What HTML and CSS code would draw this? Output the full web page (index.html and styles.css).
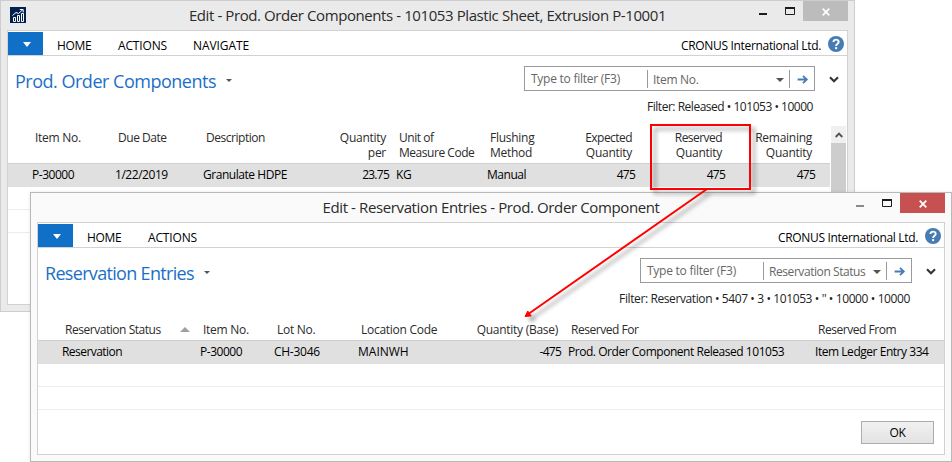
FILE: index.html
```
<!DOCTYPE html>
<html lang="en">
<head>
<meta charset="utf-8">
<title>Prod. Order Components</title>
<link rel="stylesheet" href="styles.css">
</head>
<body>
<main class="desktop">
  <section class="window window-back">
    <header class="titlebar">
      <svg class="logo" viewBox="0 0 16 16"><rect width="16" height="16" fill="#002050"/><path d="M3.5 14.5v-4h2v4zM7.5 14.5v-6h2v6zM11.5 14.5V6.5h2v8z" fill="none" stroke="#fff"/><path d="M2.5 8.5 6 5.5 8.5 6.5 13 2.5M9.8 2.5h3.4v3" fill="none" stroke="#fff"/></svg>
      <h1 class="caption">Edit - Prod. Order Components - 101053 Plastic Sheet, Extrusion P-10001</h1>
      <div class="controls">
        <svg class="sys" viewBox="0 0 44 20"><path d="M0 13h8" stroke="#1c1c1c" stroke-width="2"/><path d="M26.5 7v6.5h9V7" fill="none" stroke="#1c1c1c"/><path d="M26 7h10" stroke="#1c1c1c" stroke-width="2"/></svg>
        <button class="close"><svg viewBox="0 0 8 8"><path d="M.7.7l6.6 6.6M7.3.7.7 7.3" stroke="#fff" stroke-width="1.7"/></svg></button>
      </div>
    </header>
    <div class="frame">
      <nav class="menubar">
        <button class="app"><i class="tri-white"></i></button>
        <span class="menu-home">HOME</span><span class="menu-actions">ACTIONS</span><span class="menu-nav">NAVIGATE</span>
        <span class="company">CRONUS International Ltd.</span>
        <svg class="help" viewBox="0 0 16 16"><circle cx="8" cy="8" r="8" fill="#477bb3"/><path d="M5.4 6.1C5.4 2.8 10.7 2.9 10.7 6 10.7 7.9 8.1 7.8 8.1 10" fill="none" stroke="#fff" stroke-width="1.9"/><rect x="7.1" y="11.1" width="2" height="2" fill="#fff"/></svg>
      </nav>
      <div class="pagehead">
        <h2>Prod. Order Components</h2><i class="tri-small"></i>
        <div class="search">
          <span class="query">Type to filter (F3)</span>
          <span class="field">Item No.<i class="tri-drop"></i></span>
          <span class="go"><svg viewBox="0 0 12 10"><path d="M0 5h10M6 .9 10.2 5 6 9.1" fill="none" stroke="#477bb3" stroke-width="2"/></svg></span>
        </div>
        <svg class="chev" viewBox="0 0 10 7"><path d="M1 1.2l4 4 4-4" fill="none" stroke="#333" stroke-width="2.1"/></svg>
      </div>
      <p class="applied applied-short">Filter: Released • 101053 • 10000</p>
      <div class="gridwrap">
        <div class="grid">
          <div class="row head">
            <span class="snug">Item No.</span><span>Due Date</span><span>Description</span><span class="r snug"><b>Quantity</b><b>per</b></span><span><b>Unit of</b><b>Measure Code</b></span><span class="snug"><b>Flushing</b><b>Method</b></span><span class="r"><b class="tight">Expected</b><b class="snug">Quantity</b></span><span class="r"><b class="tight">Reserved</b><b class="snug">Quantity</b></span><span class="r snug"><b>Remaining</b><b>Quantity</b></span>
          </div>
          <div class="row selected">
            <span>P-30000</span><span>1/22/2019</span><span>Granulate HDPE</span><span class="r num">23.75</span><span>KG</span><span>Manual</span><span class="r num">475</span><span class="r num">475</span><span class="r num">475</span>
          </div>
          <div class="row empty"></div>
          <div class="row empty"></div>
        </div>
        <div class="scroll"><div class="scroll-up"><svg viewBox="0 0 8 6"><path d="M.7 5 4 1.6 7.3 5" fill="none" stroke="#505050" stroke-width="1.8"/></svg></div></div>
      </div>
    </div>
  </section>

  <section class="window window-front">
    <header class="titlebar">
      <h1 class="caption">Edit - Reservation Entries - Prod. Order Component</h1>
      <div class="controls">
        <svg class="sys" viewBox="0 0 44 20"><path d="M0 13h8" stroke="#8a8a8a" stroke-width="2"/><path d="M26.5 7v6.5h9V7" fill="none" stroke="#1c1c1c"/><path d="M26 7h10" stroke="#1c1c1c" stroke-width="2"/></svg>
        <button class="close"><svg viewBox="0 0 8 8"><path d="M.7.7l6.6 6.6M7.3.7.7 7.3" stroke="#fff" stroke-width="1.7"/></svg></button>
      </div>
    </header>
    <div class="frame">
      <nav class="menubar">
        <button class="app"><i class="tri-white"></i></button>
        <span class="menu-home">HOME</span><span class="menu-actions">ACTIONS</span>
        <span class="company">CRONUS International Ltd.</span>
        <svg class="help" viewBox="0 0 16 16"><circle cx="8" cy="8" r="8" fill="#477bb3"/><path d="M5.4 6.1C5.4 2.8 10.7 2.9 10.7 6 10.7 7.9 8.1 7.8 8.1 10" fill="none" stroke="#fff" stroke-width="1.9"/><rect x="7.1" y="11.1" width="2" height="2" fill="#fff"/></svg>
      </nav>
      <div class="pagehead">
        <h2>Reservation Entries</h2><i class="tri-small"></i>
        <div class="search">
          <span class="query">Type to filter (F3)</span>
          <span class="field">Reservation Status<i class="tri-drop"></i></span>
          <span class="go"><svg viewBox="0 0 12 10"><path d="M0 5h10M6 .9 10.2 5 6 9.1" fill="none" stroke="#477bb3" stroke-width="2"/></svg></span>
        </div>
        <svg class="chev" viewBox="0 0 10 7"><path d="M1 1.2l4 4 4-4" fill="none" stroke="#333" stroke-width="2.1"/></svg>
      </div>
      <p class="applied">Filter: Reservation • 5407 • 3 • 101053 • '' • 10000 • 10000</p>
      <div class="grid">
        <div class="row head">
          <span class="sorted">Reservation Status<i class="tri-sort"></i></span><span class="snug">Item No.</span><span class="snug">Lot No.</span><span class="snug">Location Code</span><span class="r snug">Quantity (Base)</span><span>Reserved For</span><span>Reserved From</span>
        </div>
        <div class="row selected">
          <span class="tight">Reservation</span><span>P-30000</span><span class="snug">CH-3046</span><span class="wide">MAINWH</span><span class="r num">-475</span><span>Prod. Order Component Released 101053</span><span>Item Ledger Entry 334</span>
        </div>
        <div class="row empty"></div>
        <div class="row empty"></div>
      </div>
      <footer class="actions"><button class="ok">OK</button></footer>
    </div>
  </section>

  <svg class="callout" viewBox="0 0 952 462">
    <g fill="none" stroke="#f00">
      <rect x="651" y="125" width="99" height="64" stroke-width="2"/>
      <path d="M707 189 529 313.5" stroke-width="2"/>
      <path d="M525 316.5l2.8-5.4 3.4 4.8z" fill="#f00"/>
    </g>
  </svg>
</main>
</body>
</html>
```
FILE: styles.css
```
* { box-sizing: border-box; }
body {
  margin: 0;
  background: #fff;
  color: #000;
  font: 12px/15px "Open Sans", "Noto Sans", sans-serif;
  letter-spacing: -0.46px;
  overflow: hidden;
}
h1, h2, p { margin: 0; font-weight: 400; }
b { display: block; font-weight: 400; }
button { padding: 0; border: 0; border-radius: 0; font: inherit; letter-spacing: inherit; }
svg { display: block; }
.desktop { position: relative; width: 952px; height: 462px; }

/* windows */
.window { position: absolute; display: flex; flex-direction: column; border: 1px solid #cdcdcd; padding: 0 6px 6px; }
.window-back { left: 0; top: 0; width: 855px; height: 312px; background: #eaeaea; }
.window-front { left: 30px; top: 192px; width: 922px; height: 270px; background: #fafafa; border-color: #b9b9b9; box-shadow: 0 0 3px rgba(0,0,0,.1); }
.titlebar { display: grid; grid-template-columns: 90px 1fr 90px; height: 29px; flex: none; }
.logo { grid-column: 1; width: 16px; height: 16px; margin: 6px 0 0 3px; }
.caption { grid-column: 2; justify-self: center; margin-top: 4px; font-size: 15px; line-height: 20px; letter-spacing: -0.41px; color: #2b2b2b; white-space: nowrap; }
.window-front .caption { letter-spacing: -0.38px; }
.controls { grid-column: 3; display: flex; justify-content: flex-end; }
.sys { width: 44px; height: 20px; flex: none; }
.close { display: grid; place-items: center; width: 45px; height: 20px; flex: none; background: #bcbcbc; }
.window-front .close { background: #c75050; }
.close svg { width: 8px; height: 8px; margin-top: 1px; }
.frame { flex: 1; min-height: 0; display: flex; flex-direction: column; border: 1px solid #d2d2d2; background: #fff; }

/* menu */
.menubar { display: flex; height: 25px; flex: none; padding-top: 1px; border-bottom: 1px solid #d2d2d2; line-height: 27px; }
.app { width: 35px; height: 23px; display: grid; place-items: center; background: #1070c8; }
.app i { margin: 2px 0 0 2px; }
.tri-white, .tri-small, .tri-drop, .tri-sort { display: block; width: 0; height: 0; border: solid transparent; }
.tri-white { border-width: 5px 4px 0; border-top-color: #fff; }
.tri-small { border-width: 3px 3px 0; border-top-color: #555; }
.tri-drop { border-width: 4px 4px 0; border-top-color: #555; }
.tri-sort { border-width: 0 5px 5px; border-bottom-color: #a0a0a0; }
.menu-home { width: 61px; padding-left: 14px; letter-spacing: -0.35px; }
.menu-actions { width: 75px; padding-left: 14px; letter-spacing: -0.15px; }
.menu-nav { padding-left: 14px; letter-spacing: -0.09px; }
.company { margin-left: auto; letter-spacing: -0.33px; }
.help { width: 16px; height: 16px; margin: 4px 3px 0 7px; }

/* page heading and search */
.pagehead { display: flex; align-items: flex-start; height: 36px; flex: none; padding: 10px 8px 0 7px; }
h2 { margin-top: 3px; font-size: 18px; line-height: 24px; letter-spacing: -0.49px; color: #1b70c6; white-space: nowrap; }
.window-front h2 { letter-spacing: -0.68px; }
.pagehead .tri-small { margin: 13px 0 0 10px; }
.search { display: flex; margin-left: auto; width: 291px; height: 25px; border: 1px solid #9b9b9b; color: #666; line-height: 23px; }
.query { flex: 1; padding-left: 6px; letter-spacing: -0.25px; }
.field { display: flex; justify-content: space-between; align-items: center; height: 18px; margin-top: 3px; width: 142px; padding: 1px 5px 0 5px; border-left: 1px solid #9b9b9b; letter-spacing: -0.3px; }
.go { height: 18px; margin-top: 3px; width: 25px; padding: 5px 0 0 7px; border-left: 1px solid #9b9b9b; }
.go svg { width: 12px; height: 9px; }
.window-front .search { width: 272px; }
.window-front .field { width: 123px; letter-spacing: -0.43px; }
.chev { width: 10px; height: 7px; margin: 10px 0 0 14px; }
.applied { height: 34px; flex: none; padding: 7px 34px 0 0; text-align: right; letter-spacing: -0.39px; color: #222; }
.applied-short { letter-spacing: -0.48px; }

/* list */
.gridwrap { display: flex; flex: none; }
.grid { flex: 1; }
.row { display: grid; height: 23px; border-bottom: 1px solid #ededed; white-space: nowrap; }
.window-back .row { padding-left: 20px; grid-template-columns: 83px 88px 130px 63px 91px 77px 78px 90px 90px; }
.window-front .row { padding-left: 20px; grid-template-columns: 138px 74px 84px 109px 101px 247px 130px; }
.row > span { padding: 3px 3px 0 4px; }
.row.head { height: 38px; border-color: #cfcfcf; color: #2b2b2b; }
.row.head > span { padding: 4px 6px 0 7px; }
.window-front .row.head { height: 23px; }
.row.selected { background: #e0e0e0; border-color: #e0e0e0; }
.r { text-align: right; }
.row .snug { letter-spacing: -0.27px; }
.row .num { letter-spacing: -0.75px; }
.row .tight { letter-spacing: -0.55px; }
.row .wide { letter-spacing: 0; }
.row .sorted { display: flex; justify-content: space-between; }
.sorted .tri-sort { margin-top: 5px; }
.scroll { width: 17px; height: 130px; background: #cdcdcd; border-right: 1px solid #fff; border-left: 1px solid #fff; }
.scroll-up { display: grid; place-items: center; height: 17px; background: #f0f0f0; }
.scroll-up svg { width: 8px; height: 6px; }
.actions { margin-top: auto; display: flex; justify-content: flex-end; padding: 0 10px 10px 0; }
.ok { width: 73px; height: 23px; border: 1px solid #acacac; background: linear-gradient(#f1f1f1, #e3e3e3); color: #000; }

/* annotation over both windows */
.callout { position: absolute; inset: 0; width: 952px; height: 462px; filter: drop-shadow(4px 4px 2px rgba(0,0,0,.4)); pointer-events: none; }
```
